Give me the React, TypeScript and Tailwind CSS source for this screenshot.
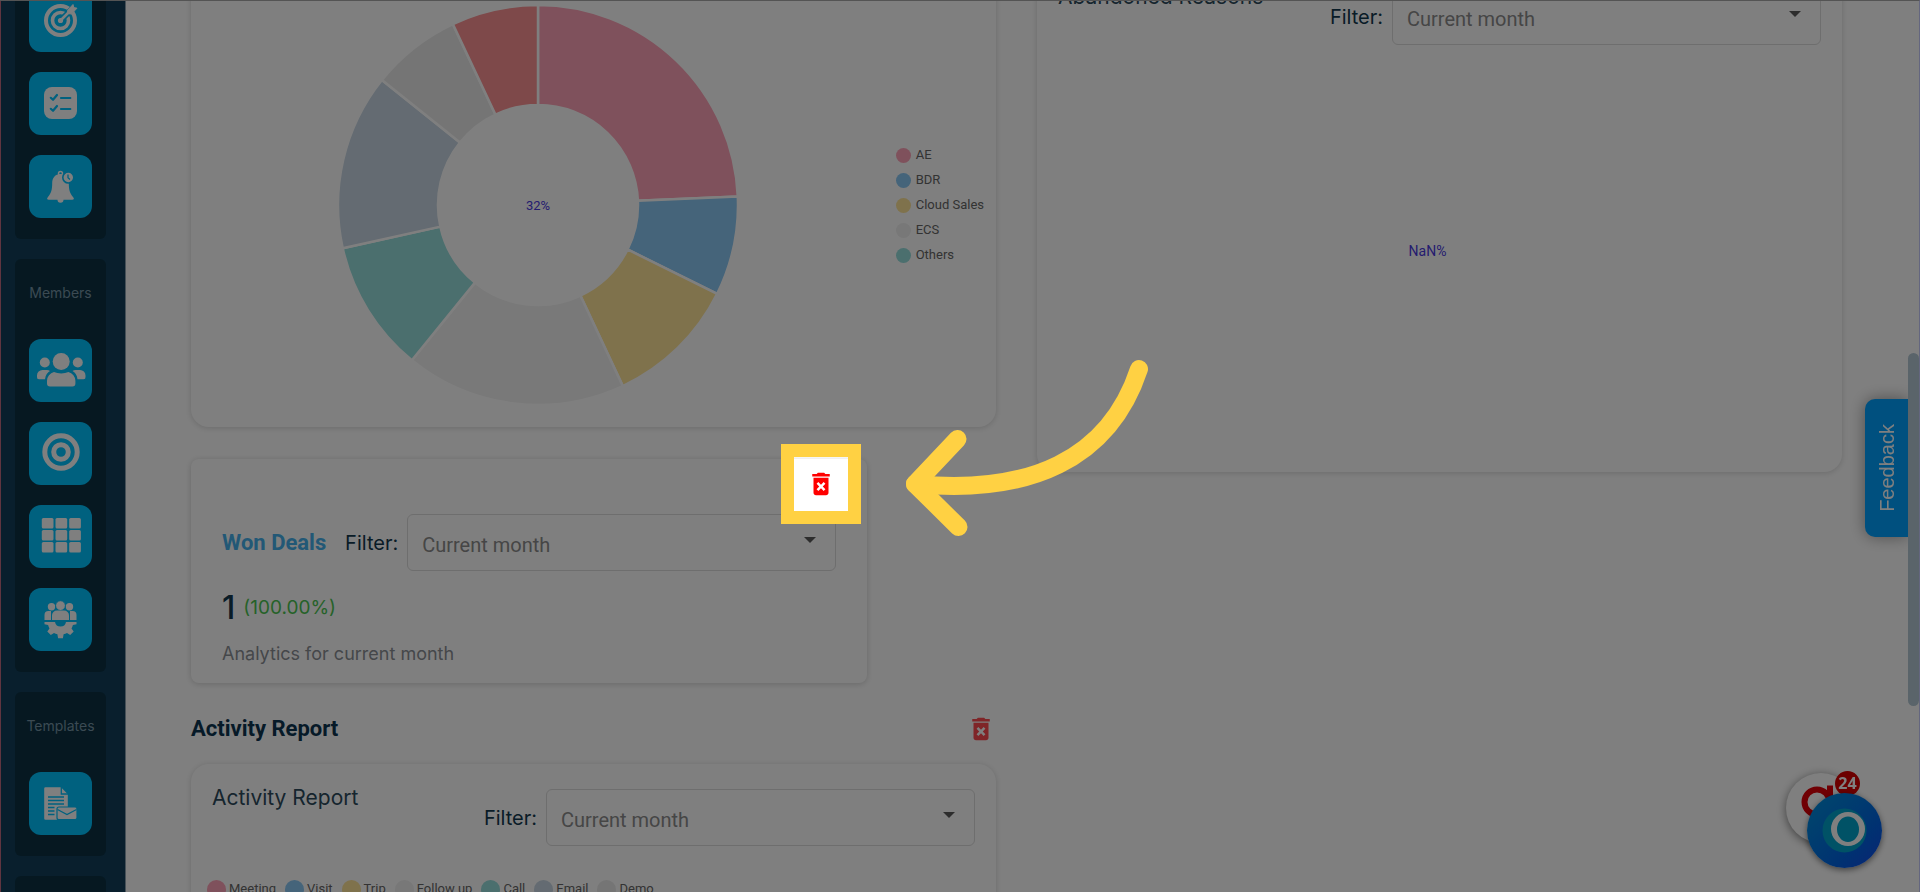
import type { ReactNode } from "react";
import { MdDeleteForever } from "react-icons/md";

const BLUE = "#00c2ff";

function TargetIcon() {
    return (
        <svg viewBox="0 0 63 63" className="w-full h-full" fill="none" stroke="white">
            <circle cx="31.5" cy="31.5" r="14.5" strokeWidth="4" />
            <circle cx="31.5" cy="31.5" r="8" strokeWidth="3.6" />
            <path d="M31.5 31.5L46 17" stroke={BLUE} strokeWidth="6" />
            <circle cx="31.5" cy="31.5" r="2.6" fill="white" stroke="none" />
            <path d="M31.5 31.5L42 21" strokeWidth="2.6" strokeLinecap="round" />
            <path d="M38.5 21.5L44 15.5L44.8 18.6L48 19.2L42.5 25L39 24.6Z" fill="white" strokeWidth="1" strokeLinejoin="round" />
        </svg>
    );
}

function ChecklistIcon() {
    return (
        <svg viewBox="0 0 63 63" className="w-full h-full" fill="none">
            <rect x="15" y="15" width="33" height="32" rx="8" fill="white" />
            <path d="M21.8 25.8l2.2 2l4 -4.8M32 26h9.3M21.8 36.8l2.2 2l4 -4.8M32 37h9.3" stroke={BLUE} strokeWidth="2.2" strokeLinecap="round" strokeLinejoin="round" />
        </svg>
    );
}

function BellIcon() {
    return (
        <svg viewBox="0 0 63 63" className="w-full h-full">
            <circle cx="31.5" cy="18.6" r="2" fill="none" stroke="white" strokeWidth="1.5" />
            <path d="M31.5 19c-5.5 0-8.3 4-8.3 9c0 7-1 10-4.4 14.2c-1.2 1.5-.8 2.5 1 2.5h8.7a3 3 0 0 0 6 0h8.7c1.8 0 2.2-1 1-2.5c-3.4-4.2-4.4-7.2-4.4-14.2c0-5-2.8-9-8.3-9z" fill="white" />
            <circle cx="39.3" cy="22.5" r="5.5" fill="white" stroke={BLUE} strokeWidth="1.6" />
            <path d="M39 19.5v3.3l2 1.8" fill="none" stroke={BLUE} strokeWidth="1.3" />
        </svg>
    );
}

function UsersIcon() {
    return (
        <svg viewBox="0 0 63 63" className="w-full h-full" fill="white">
            <circle cx="15.8" cy="23.5" r="5" />
            <circle cx="48.8" cy="23.5" r="5" />
            <path d="M8 38v-1.5a5.5 5.5 0 0 1 5.5-5.5h4.5a5 5 0 0 1 3 1c-2.5 1.5-4.5 4-5 8.2h-6a2 2 0 0 1-2-2.2z" />
            <path d="M56.5 38v-1.5a5.5 5.5 0 0 0-5.5-5.5h-4.5a5 5 0 0 0-3 1c2.5 1.5 4.5 4 5 8.2h6a2 2 0 0 0 2-2.2z" />
            <circle cx="32.2" cy="22.5" r="8.5" />
            <path d="M18 44.5v-2.8a9 9 0 0 1 7-8.7c2 .8 4.5 1.4 7.2 1.4s5.2-.6 7.2-1.4a9 9 0 0 1 7 8.7v2.8a3 3 0 0 1-3 3h-22.4a3 3 0 0 1-3-3z" />
        </svg>
    );
}

function BullseyeIcon() {
    return (
        <svg viewBox="0 0 63 63" className="w-full h-full" fill="none" stroke="white" strokeWidth="5">
            <circle cx="32" cy="30" r="16.2" />
            <circle cx="32" cy="30" r="7.3" />
        </svg>
    );
}

function GridIcon() {
    return (
        <svg viewBox="0 0 63 63" className="w-full h-full" fill="white">
            {[13, 25, 37].map((y) => [12.8, 26.5, 40.2].map((x) => <rect key={`${x}-${y}`} x={x} y={y} width="11.7" height="10.6" rx="1.5" />))}
        </svg>
    );
}

function TeamGearIcon() {
    return (
        <svg viewBox="0 0 63 63" className="w-full h-full" fill="white">
            <circle cx="22.5" cy="18.8" r="3.7" />
            <circle cx="40.5" cy="18.8" r="3.7" />
            <path d="M15.5 32v-5a4 4 0 0 1 4-4h2.5v9zM47.5 32v-5a4 4 0 0 0-4-4h-2.5v9z" />
            <circle cx="31.5" cy="17.6" r="4.9" stroke={BLUE} strokeWidth="1" />
            <path d="M23 32v-4.5a5 5 0 0 1 5-5h7a5 5 0 0 1 5 5v4.5z" />
            <path d="M15.5 34h10.5a5.6 5.6 0 0 0 11 0h10.5v2.2l-3.6.8a13 13 0 0 1-1.4 3.4l2.2 3.2l-3.5 3.5l-3.2-2.2a12 12 0 0 1-3.4 1.4l-.7 3.9h-4.8l-.7-3.9a12 12 0 0 1-3.4-1.4l-3.2 2.2l-3.5-3.5l2.2-3.2a13 13 0 0 1-1.4-3.4l-3.6-.8z" />
        </svg>
    );
}

function DocumentMailIcon() {
    return (
        <svg viewBox="0 0 63 63" className="w-full h-full" fill="none">
            <path d="M16.5 15.3h15.5l6.8 7v25.4h-22.3a1.3 1.3 0 0 1-1.3-1.3v-29.8a1.3 1.3 0 0 1 1.3-1.3z" fill="white" />
            <path d="M32.3 15v7h7" stroke={BLUE} strokeWidth="1.3" />
            <path d="M19 25h16M19 28.5h16M19 32h16M19 35.5h6.5M19 39h6.5M19 42.5h6.5" stroke={BLUE} strokeWidth="1.3" />
            <rect x="28" y="35" width="20" height="12.7" rx="2" fill="white" stroke={BLUE} strokeWidth="1.2" />
            <path d="M28.5 37.5l9.5 5l9.5-5" stroke={BLUE} strokeWidth="1.3" />
        </svg>
    );
}

function NavButton({ label, children }: { label: string; children: ReactNode }) {
    return (
        <button aria-label={label} className="w-[63px] h-[63px] shrink-0 rounded-xl bg-[#00c2ff]">
            {children}
        </button>
    );
}

function NavGroup({ title, children }: { title?: string; children?: ReactNode }) {
    return (
        <div className="w-[91px] min-h-[79px] shrink-0 rounded-md bg-[#0c3143] flex flex-col items-center gap-5 pb-[21px]">
            {title && <h2 className="h-[60px] pt-6 text-sm leading-5 text-[#7695a6]">{title}</h2>}
            {children}
        </div>
    );
}

function Sidebar() {
    return (
        <nav className="w-[126px] shrink-0 flex flex-col gap-5 pl-[14px] bg-[#123e5a] border-l border-l-[#c06a80] border-r border-r-[#8fa3b0] overflow-hidden">
            <div className="-mt-[11px]">
                <NavGroup>
                    <NavButton label="Goals"><TargetIcon /></NavButton>
                    <NavButton label="Tasks"><ChecklistIcon /></NavButton>
                    <NavButton label="Reminders"><BellIcon /></NavButton>
                </NavGroup>
            </div>
            <NavGroup title="Members">
                <NavButton label="Users"><UsersIcon /></NavButton>
                <NavButton label="Targets"><BullseyeIcon /></NavButton>
                <NavButton label="Territories"><GridIcon /></NavButton>
                <NavButton label="Teams"><TeamGearIcon /></NavButton>
            </NavGroup>
            <NavGroup title="Templates">
                <NavButton label="Email templates"><DocumentMailIcon /></NavButton>
            </NavGroup>
            <NavGroup />
        </nav>
    );
}

function Filter({ id }: { id: string }) {
    return (
        <div className="flex items-center gap-[9px]">
            <label htmlFor={id} className="text-xl text-[#12384e]">Filter:</label>
            <div className="relative w-[429px]">
                <select id={id} className="appearance-none w-full h-[57px] pl-[14px] pt-1 rounded-md border border-[#dcdcdc] bg-white font-['Roboto',sans-serif] text-xl text-[#8c8c8c]">
                    <option>Current month</option>
                </select>
                <svg viewBox="0 0 12 6" className="absolute right-5 top-[23px] w-3 h-1.5 pointer-events-none"><path d="M0 0h12l-6 6z" fill="#5a5a5a" /></svg>
            </div>
        </div>
    );
}

const slices = [
    { from: 0, to: 87.6, color: "#ffa3b8" },
    { from: 87.6, to: 116.4, color: "#8ac8f4" },
    { from: 116.4, to: 154.9, color: "#ffe498" },
    { from: 154.9, to: 219.1, color: "#f3f3f3" },
    { from: 219.1, to: 257.5, color: "#96dedc" },
    { from: 257.5, to: 308.7, color: "#c8d7e4" },
    { from: 308.7, to: 334.8, color: "#ebebeb" },
    { from: 334.8, to: 360, color: "#fc9294" },
];

function point(angle: number, r: number) {
    const a = (angle * Math.PI) / 180;
    return `${(200 + r * Math.sin(a)).toFixed(2)} ${(200 - r * Math.cos(a)).toFixed(2)}`;
}

function Donut() {
    return (
        <svg viewBox="0 0 400 400" className="w-[400px] h-[400px] shrink-0">
            {slices.map((s) => (
                <path key={s.from} d={`M${point(s.from, 200)}A200 200 0 0 1 ${point(s.to, 200)}L${point(s.to, 100)}A100 100 0 0 0 ${point(s.from, 100)}Z`} fill={s.color} stroke="white" strokeWidth="2.5" />
            ))}
            <text x="200" y="205" textAnchor="middle" fontSize="13" fontFamily="Roboto, sans-serif" fill="#4a3ae0">32%</text>
        </svg>
    );
}

function ChartCard({ id, title, children }: { id: string; title: string; children: ReactNode }) {
    return (
        <section className="rounded-[18px] bg-white px-4 pt-[21px] shadow-[0_1px_6px_rgba(0,0,0,0.16)]">
            <div className="flex justify-between px-[5px]">
                <h3 className="text-[21px] leading-[26px] text-[#2c4a5c]">{title}</h3>
                <div className="mt-1"><Filter id={id} /></div>
            </div>
            {children}
        </section>
    );
}

const roles = [
    { name: "AE", dot: "bg-[#ffa3b8]" },
    { name: "BDR", dot: "bg-[#8ac8f4]" },
    { name: "Cloud Sales", dot: "bg-[#ffe498]" },
    { name: "ECS", dot: "bg-[#f0f0f0]" },
    { name: "Others", dot: "bg-[#96dedc]" },
];

const activities = [
    { name: "Meeting", dot: "bg-[#ffa3b8]" },
    { name: "Visit", dot: "bg-[#8ac8f4]" },
    { name: "Trip", dot: "bg-[#ffe498]" },
    { name: "Follow up", dot: "bg-[#f0f0f0]" },
    { name: "Call", dot: "bg-[#96dedc]" },
    { name: "Email", dot: "bg-[#c8d7e4]" },
    { name: "Demo", dot: "bg-[#ebebeb]" },
];

/* Dims the whole page and leaves the parent's surroundings lit */
function Spotlight() {
    return (
        <>
            <span className="absolute -inset-[25px] z-50 border-[13px] border-[#ffd143] shadow-[0_0_0_3000px_rgba(0,0,0,0.5)] pointer-events-none" />
            <svg viewBox="0 0 244 178" className="absolute left-[99px] top-[-109px] z-50 w-[244px] h-[178px] max-w-none overflow-visible pointer-events-none" fill="none" stroke="#ffd143" strokeWidth="18" strokeLinecap="round" strokeLinejoin="round">
                <path d="M10 124C124 135 204 100 234 9" />
                <path d="M52.5 79L10 124L53.5 167" />
            </svg>
        </>
    );
}

function WonDeals() {
    return (
        <section className="w-[84%] min-w-[640px] mt-8 rounded-lg bg-white px-[31px] pt-[10px] pb-[17px] shadow-[0_1px_6px_rgba(0,0,0,0.18)]">
            <div className="flex justify-end">
                <button aria-label="Remove Won Deals" className="relative w-[30px] h-[30px] text-[#ff0000]">
                    <MdDeleteForever className="w-full h-full" />
                    <Spotlight />
                </button>
            </div>
            <div className="mt-[15px] flex items-center justify-between">
                <h3 className="font-['Roboto',sans-serif] font-bold text-[22px] text-[#45b1ec]">Won Deals</h3>
                <Filter id="won-filter" />
            </div>
            <p className="mt-[21px] flex items-center gap-2 leading-8">
                <span className="text-[32px] font-medium text-[#12384e]">1</span>
                <span className="text-[19px] text-[#4cc552]">(100.00%)</span>
            </p>
            <p className="mt-[18px] text-lg leading-6 text-[#8b8f95]">Analytics for current month</p>
        </section>
    );
}

function ChatWidgets() {
    return (
        <div className="fixed right-[37px] bottom-[19px] w-[100px] h-[106px]">
            <button aria-label="Notifications" className="absolute left-[3px] top-[6px] w-[70px] h-[70px] rounded-full bg-white shadow-[0_2px_10px_rgba(0,0,0,0.5)]">
                <svg viewBox="0 0 70 70" className="w-full h-full" fill="none" stroke="#e00008" strokeWidth="6">
                    <circle cx="31" cy="29" r="12.5" />
                    <path d="M44 12.5v32" />
                </svg>
            </button>
            <span className="absolute left-[52px] top-[4px] w-[25px] h-[25px] rounded-full bg-[#d80000] text-center font-['Open_Sans',sans-serif] text-base leading-6 font-bold text-white">24</span>
            <button aria-label="Open chat" className="absolute left-[24px] top-[26px] w-[75px] h-[75px] rounded-full bg-linear-to-br from-[#0090d8] to-[#1448e8] shadow-[0_2px_6px_rgba(0,0,0,0.5)]">
                <svg viewBox="0 0 75 75" className="w-full h-full">
                    <circle cx="37.5" cy="37.5" r="22" fill="#00a4cc" />
                    <path fillRule="evenodd" d="M41 19a17 17 0 1 1 0 34a17 17 0 1 1 0-34zM41 23.5a11 12.8 0 1 0 0 25.6a11 12.8 0 1 0 0-25.6z" fill="white" />
                </svg>
            </button>
        </div>
    );
}

export default function App() {
    return (
        <div className="relative flex h-screen overflow-hidden bg-white font-['Inter',sans-serif]">
            <Sidebar />
            <main className="flex-1 min-w-0 pl-[65px] pr-[78px]">
                <div className="-mt-[37px] grid grid-cols-2 items-start gap-[41px]">
                    <div>
                        <section className="h-[464px] rounded-[18px] bg-white flex items-center justify-between pt-[20px] pl-[147px] pr-[12px] shadow-[0_1px_6px_rgba(0,0,0,0.16)]">
                            <Donut />
                            <ul className="flex flex-col gap-[5px] font-['Roboto',sans-serif] text-[13px] leading-5 text-[#666666]">
                                {roles.map((r) => <li key={r.name} className="flex items-center gap-[5px]"><span className={`w-[15px] h-[15px] rounded-full ${r.dot}`} />{r.name}</li>)}
                            </ul>
                        </section>
                        <WonDeals />
                        <div className="mt-[31px] mb-5 flex items-center justify-between">
                            <h2 className="font-['Roboto',sans-serif] font-bold text-[22px] leading-[30px] text-[#0c3450]">Activity Report</h2>
                            <button aria-label="Remove Activity Report" className="w-[30px] h-[30px] text-[#ff4a50]"><MdDeleteForever className="w-full h-full" /></button>
                        </div>
                        <ChartCard id="activity-filter" title="Activity Report">
                            <ul className="mt-[33px] h-[300px] flex gap-[9px] font-['Roboto',sans-serif] text-[13px] leading-5 text-[#666666]">
                                {activities.map((a) => <li key={a.name} className="flex h-5 items-center gap-[3px]"><span className={`w-[19px] h-[19px] rounded-full ${a.dot}`} />{a.name}</li>)}
                            </ul>
                        </ChartCard>
                    </div>
                    <ChartCard id="abandoned-filter" title="Abandoned Reasons">
                        <div className="h-[427px] flex items-center justify-center pr-6 pb-4 font-['Roboto',sans-serif] text-sm text-[#4a3ae0]">NaN%</div>
                    </ChartCard>
                </div>
            </main>
            <button className="fixed right-3 top-[399px] w-[43px] h-[138px] rounded-l-[10px] bg-[#00a0ff] shadow-[0_0_16px_rgba(0,0,0,0.4)] flex items-center justify-center">
                <span className="[writing-mode:vertical-rl] rotate-180 font-['Liberation_Sans',sans-serif] text-xl leading-6 text-white">Feedback</span>
            </button>
            <ChatWidgets />
            <div className="fixed right-px top-[353px] w-[11px] h-[353px] rounded-full bg-[#b4c8d4]" />
            <div className="fixed inset-0 border-t border-t-[#a8a8a8] border-r border-r-[#c8ccff] pointer-events-none" />
        </div>
    );
}
